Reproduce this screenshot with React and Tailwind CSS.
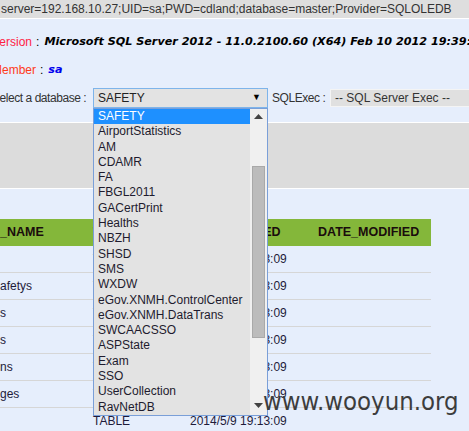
import React from "react";

const dbs = [
  "SAFETY",
  "AirportStatistics",
  "AM",
  "CDAMR",
  "FA",
  "FBGL2011",
  "GACertPrint",
  "Healths",
  "NBZH",
  "SHSD",
  "SMS",
  "WXDW",
  "eGov.XNMH.ControlCenter",
  "eGov.XNMH.DataTrans",
  "SWCAACSSO",
  "ASPState",
  "Exam",
  "SSO",
  "UserCollection",
  "RavNetDB",
];

const rows = ["", "afetys", "s", "s", "ns", "ges", ""];

export default function App() {
  return (
    <div className="relative w-[469px] h-[431px] overflow-hidden bg-[#e6eefc] font-['Liberation_Sans',Arial,sans-serif] text-[12px] text-[#333]">
      {/* connection string */}
      <div className="h-[19px] bg-[#dedede] border-b border-white pl-[1px] leading-[18px] whitespace-nowrap">
        server=192.168.10.27;UID=sa;PWD=cdland;database=master;Provider=SQLOLEDB
      </div>

      <div className="-ml-2 pt-[11px]">
        <div className="h-[24px] flex items-center whitespace-nowrap">
          <span className="text-[#ff2244]">Version</span>
          <span className="text-black ml-[4px] mr-[5px]">:</span>
          <span className="font-['DejaVu_Sans',Verdana,sans-serif] text-[11.2px] font-bold italic text-black">
            Microsoft SQL Server 2012 - 11.0.2100.60 (X64) Feb 10 2012 19:39:15
          </span>
        </div>
        <div className="mt-[4px] h-[24px] flex items-center whitespace-nowrap">
          <span className="text-[#ff3a1a]">Member</span>
          <span className="text-black ml-[4px] mr-[5px]">:</span>
          <span className="font-['DejaVu_Sans',Verdana,sans-serif] text-[11.2px] font-bold italic text-[#0000ee]">
            sa
          </span>
        </div>
        <div className="mt-[6px] h-[20px] flex items-center whitespace-nowrap">
          <span className="w-[101px] shrink-0 tracking-[-0.45px]">Select a database :</span>
          <div className="w-[175px] h-[20px] shrink-0 flex items-center justify-between bg-[#e3e3e3] border border-[#7eb4ea] pl-[4px] pr-[6px] text-[#222]">
            <span>SAFETY</span>
            <span className="text-[9px] text-black">▼</span>
          </div>
          <span className="ml-[4px] w-[58px] shrink-0 tracking-[-0.45px]">SQLExec :</span>
          <div className="w-[150px] h-[18px] shrink-0 flex items-center bg-[#e0e0e0] border border-[#f4f4f4] pl-[4px]">
            -- SQL Server Exec --
          </div>
        </div>
      </div>

      {/* grey band */}
      <div className="mt-[14px] h-[67px] bg-[#dcdcdc] border-y border-white" />

      {/* table */}
      <div className="mt-[30px] w-[431px]">
        <div className="h-[27px] flex items-center bg-[#84b73a] font-bold text-[12.5px] text-[#1a0c0c] whitespace-nowrap">
          <span className="w-[93px] shrink-0">_NAME</span>
          <span className="w-[88px] shrink-0">TABLE_TYPE</span>
          <span className="w-[137px] shrink-0">DATE_CREATED</span>
          <span>DATE_MODIFIED</span>
        </div>
        {rows.map((name, i) => (
          <div
            key={i}
            className="h-[27px] flex items-center border-b border-[#d6d6d6] text-[#1e1b3a] whitespace-nowrap"
          >
            <span className="w-[93px] shrink-0">{name}</span>
            <span className="w-[97px] shrink-0">TABLE</span>
            <span className="w-[128px] shrink-0">2014/5/9 19:13:09</span>
            <span></span>
          </div>
        ))}
      </div>

      {/* open dropdown list */}
      <div className="absolute left-[93px] top-[108px] w-[175px] h-[308px] flex border border-[#7a9fd8] bg-[#e3e3e3]">
        <div className="flex-1 flex flex-col text-[#1e1b2e]">
          {dbs.map((d, i) => (
            <div
              key={d}
              className={
                i === 0
                  ? "h-[15.3px] leading-[15.3px] pl-[4px] bg-[#1e90ff] text-white"
                  : "h-[15.3px] leading-[15.3px] pl-[4px]"
              }
            >
              {d}
            </div>
          ))}
        </div>
        <div className="w-[17px] h-full bg-[#f0f0f0] flex flex-col items-center">
          <svg width="9" height="5" viewBox="0 0 9 5" className="mt-[5px]">
            <path d="M0 5 L4.5 0 L9 5 Z" fill="#444" />
          </svg>
          <div className="mt-[47px] w-[13px] h-[172px] bg-[#bcbcbc] border border-[#a9a9a9]" />
          <div className="flex-1" />
          <svg width="9" height="5" viewBox="0 0 9 5" className="mb-[7px]">
            <path d="M0 0 L9 0 L4.5 5 Z" fill="#444" />
          </svg>
        </div>
      </div>

      {/* watermark */}
      <div className="absolute left-[263px] top-[389px] leading-[25px] text-[25.5px] text-[#3d3d3d] font-['DejaVu_Sans_Condensed','DejaVu_Sans',sans-serif] whitespace-nowrap">
        www.wooyun.org
      </div>
    </div>
  );
}
